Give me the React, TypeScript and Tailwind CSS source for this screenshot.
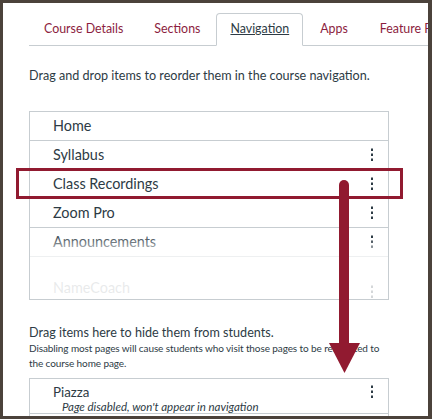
import React from 'react';

const rows = ['Home', 'Syllabus', 'Class Recordings', 'Zoom Pro'];

function Kebab({ faint }: { faint?: boolean }) {
  return (
    <svg width="4" height="14" viewBox="0 0 4 14" className={faint ? 'opacity-20' : ''}>
      <rect x="1" y="0.5" width="2" height="2.5" fill="#2d3b45" />
      <rect x="1" y="5.5" width="2" height="2.5" fill="#2d3b45" />
      <rect x="1" y="10.5" width="2" height="2.5" fill="#2d3b45" />
    </svg>
  );
}

export default function App() {
  return (
    <div className="relative w-[432px] h-[419px] overflow-hidden bg-white border-solid border-[#4b423b] border-t-[3px] border-l-[3px] border-r-[4px] border-b-[3px] font-['Lato','Noto_Sans',sans-serif] text-[#2d3b45]">
      <div className="pl-[26px]">
        {/* tabs */}
        <div className="flex mt-[10px] border-b border-[#c7cdd1] whitespace-nowrap text-[12.4px] leading-[30px] text-[#8c1d40]">
          <div className="px-[14px] border border-transparent">Course Details</div>
          <div className="px-[15px] border border-transparent">Sections</div>
          <div className="px-[13px] border border-[#c7cdd1] border-b-white -mb-px rounded-t-[4px] bg-white text-[#2d3b45] underline">
            Navigation
          </div>
          <div className="px-[16px] border border-transparent">Apps</div>
          <div className="px-[14px] border border-transparent">Feature Previews</div>
        </div>

        <p className="mt-[22px] text-[12.6px] leading-[16px] whitespace-nowrap">
          Drag and drop items to reorder them in the course navigation.
        </p>

        {/* enabled list */}
        <div className="relative mt-[27px] w-[360px] border border-[#c7cdd1] text-[14.4px]">
          {rows.map((r) => (
            <div key={r} className="flex items-center justify-between h-[29px] border-b border-[#c7cdd1] pl-[23px] pr-[14px]">
              <span>{r}</span>
              {r !== 'Home' && <Kebab />}
            </div>
          ))}
          <div className="flex items-center justify-between h-[29px] border-b border-[#eef0f1] pl-[23px] pr-[14px]">
            <span className="text-[#4a5660]">Announcements</span>
            <Kebab />
          </div>
          <div className="flex items-end justify-between h-[42px] pl-[23px] pr-[14px]">
            <span className="opacity-10">NameCoach</span>
            <Kebab faint />
          </div>
          <div className="absolute left-0 right-0 top-[126px] h-[18px] bg-gradient-to-b from-white/0 to-white/90"></div>
        </div>

        {/* disabled section */}
        <p className="mt-[25px] text-[12.6px] leading-[16px] whitespace-nowrap">Drag items here to hide them from students.</p>
        <p className="text-[10px] leading-[15px] tracking-[-0.1px] w-[362px]">
          Disabling most pages will cause students who visit those pages to be redirected to the course home page.
        </p>
        <div className="mt-[7px] w-[360px] border border-[#c7cdd1]">
          <div className="relative h-[35px] border-b border-[#c7cdd1] pl-[23px] pr-[14px]">
            <div className="text-[13.3px] leading-[16px] pt-[5px]">Piazza</div>
            <div className="text-[11.5px] leading-[13px] italic pl-[9px]">Page disabled, won't appear in navigation</div>
            <div className="absolute right-[14px] top-[6px]">
              <Kebab />
            </div>
          </div>
          <div className="h-[20px]"></div>
        </div>
      </div>

      {/* annotation: highlight box */}
      <div className="absolute left-[13px] top-[165px] w-[387px] h-[31px] border-[3px] border-[#911a30]"></div>

      {/* annotation: arrow */}
      <svg className="absolute left-[-3px] top-[-3px]" width="432" height="419" viewBox="0 0 432 419">
        <path d="M339 185 a5 5 0 0 1 10 0 V344 H339 Z" fill="#911a30" />
        <polygon points="329,343 360,343 344.5,373" fill="#911a30" />
      </svg>
    </div>
  );
}
